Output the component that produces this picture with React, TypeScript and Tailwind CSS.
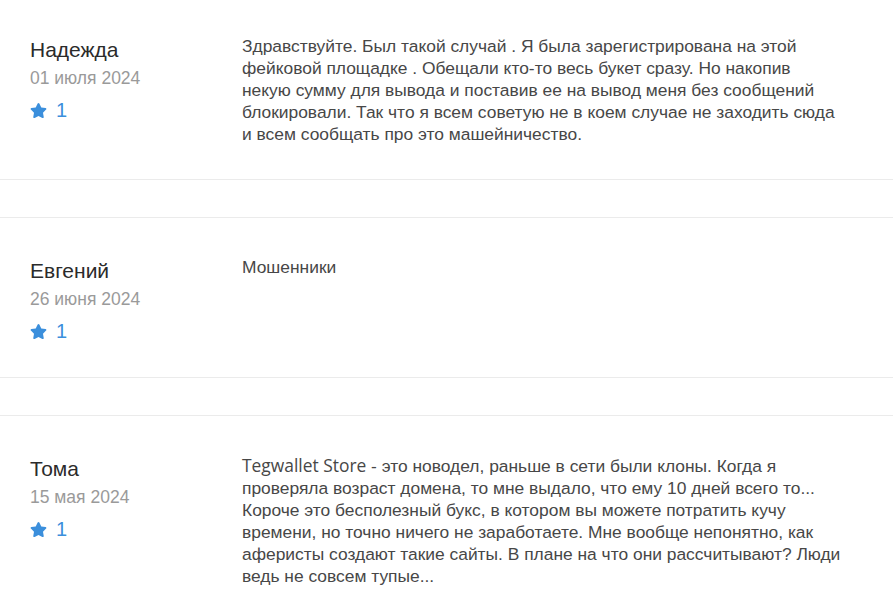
import React from 'react';
import { FaStar } from 'react-icons/fa';

interface Review {
  id: number;
  name: string;
  date: string;
  rating: number;
  prefix?: string;
  lines: string[];
}

const reviews: Review[] = [
  {
    id: 1,
    name: 'Надежда',
    date: '01 июля 2024',
    rating: 1,
    lines: [
      'Здравствуйте. Был такой случай . Я была зарегистрирована на этой',
      'фейковой площадке . Обещали кто-то весь букет сразу. Но накопив',
      'некую сумму для вывода и поставив ее на вывод меня без сообщений',
      'блокировали. Так что я всем советую не в коем случае не заходить сюда',
      'и всем сообщать про это машейничество.',
    ],
  },
  {
    id: 2,
    name: 'Евгений',
    date: '26 июня 2024',
    rating: 1,
    lines: ['Мошенники'],
  },
  {
    id: 3,
    name: 'Тома',
    date: '15 мая 2024',
    rating: 1,
    prefix: 'Tegwallet Store',
    lines: [
      ' - это новодел, раньше в сети были клоны. Когда я',
      'проверяла возраст домена, то мне выдало, что ему 10 дней всего то...',
      'Короче это бесполезный букс, в котором вы можете потратить кучу',
      'времени, но точно ничего не заработаете. Мне вообще непонятно, как',
      'аферисты создают такие сайты. В плане на что они рассчитывают? Люди',
      'ведь не совсем тупые...',
    ],
  },
];

const ReviewCard: React.FC<{ review: Review; first?: boolean }> = ({ review, first }) => (
  <div
    className={
      first
        ? 'flex border-b border-[#ebebeb] px-[30px] pt-[35px] pb-[34px]'
        : 'flex border-y border-[#ebebeb] px-[30px] pt-[38px] pb-[34px] mt-[37px]'
    }
  >
    <div className="w-[212px] shrink-0 pt-[2px] font-['Liberation_Sans',sans-serif]">
      <div className="text-[21px] leading-[26px] text-[#2b2b2b]">{review.name}</div>
      <div className="mt-[4px] text-[17.5px] leading-[22px] text-[#9a9a9a]">{review.date}</div>
      <div className="mt-[9px] flex items-center text-[20px] leading-[24px] text-[#3b8fdc]">
        <FaStar className="w-[17px] h-[17px] mr-[9px]" />
        <span>{review.rating}</span>
      </div>
    </div>
    <div className="flex-1 text-[17.4px] leading-[22px] text-[#474747] font-['Liberation_Sans',sans-serif]">
      {review.lines.map((line, i) => (
        <div key={i} className="whitespace-pre">
          {i === 0 && review.prefix && (
            <span className="font-['Open_Sans',sans-serif]">{review.prefix}</span>
          )}
          {line}
        </div>
      ))}
    </div>
  </div>
);

export default function App() {
  return (
    <div className="bg-white min-h-[609px] w-full">
      {reviews.map((r, i) => (
        <ReviewCard key={r.id} review={r} first={i === 0} />
      ))}
    </div>
  );
}
